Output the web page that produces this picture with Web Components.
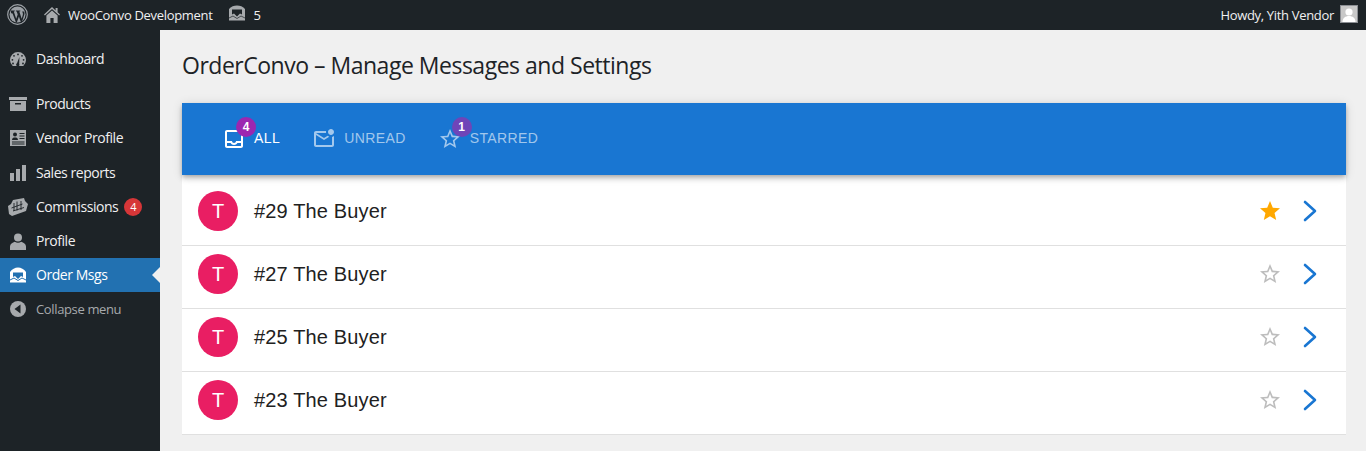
<!DOCTYPE html>
<html lang="en"><head><meta charset="utf-8"><title>OrderConvo</title>
<style>
html,body{margin:0;height:451px;overflow:hidden;background:#f0f0f0}
body{display:flex;flex-direction:column;font-family:"Open Sans","Noto Sans",sans-serif}
.shell{display:flex;flex:1;min-height:0}
</style></head><body>
<template id="t-bar"><style>
:host{display:flex;align-items:center;height:30px;background:#1d2327;color:#f0f0f1;font:13px/30px "Open Sans",sans-serif;letter-spacing:-.32px;flex:none}
.gap{flex:1}
.logo{margin-left:7px;width:21px;height:21px;margin-top:-1px}
.home{margin-left:16px;width:16px;height:16px;margin-top:0}
.site{margin-left:8px}
.msg{margin-left:16px;width:18px;height:16px;margin-top:-5px}
.n{margin-left:7px}
.how{margin-right:6px}
.av{width:18px;height:18px;margin-right:8px;margin-top:-2px;display:block}
svg{display:block;flex:none}
</style>
<svg class="logo" viewBox="0 0 21 21"><circle cx="10.5" cy="10.5" r="9.8" fill="none" stroke="#9ca1a6" stroke-width="1.2"/><circle cx="10.5" cy="10.5" r="8" fill="#9ca1a6"/><path d="M3.6 6.6h4.2v.6l-1 .2 2.4 7.4 1.5-4.4-1-3-.8-.2v-.6h4.4v.6l-1 .2 2.4 7.3 1.1-3.7c.4-1.5-.2-2.6-.7-3.5h2.2l.2 2.6-2.6 8.2-.9.3-2.1-6.1-2.1 6.1-.9-.3-3.3-8.9-1.4-.2z" fill="#1d2327"/></svg>
<svg class="home" viewBox="0 0 16 16"><path d="M8 0 0 7.4l.9 1L8 2l7.1 6.4.9-1-2.400-2.200V1h-2v2.400z" fill="#a7aaad"/><path d="M2.400 8.600 8 3.500l5.600 5.100V16H9.600v-5H6.400v5h-4z" fill="#a7aaad"/></svg>
<span class="site">WooConvo Development</span>
<svg class="msg" viewBox="0 0 18 16"><path d="M1 15.500V4C3 1.500 6 .5 9 .5S15 1.500 17 4v11.500z" fill="#a7aaad"/><path d="M4 4.500h10v5l-2-1-3 3-3-3-2 1z" fill="#1d2327"/><path d="M1 13l4-2 4 2.500 4-2.500 4 2" stroke="#1d2327" stroke-width=".7" fill="none"/></svg>
<span class="n">5</span>
<span class="gap"></span>
<span class="how">Howdy, Yith Vendor</span>
<svg class="av" viewBox="0 0 18 18"><rect width="18" height="18" fill="#c8c8c8"/><rect x=".5" y=".5" width="17" height="17" fill="none" stroke="#8c8f94"/><circle cx="9" cy="7" r="3.600" fill="#fff"/><path d="M2.500 17c0-4 3-6 6.500-6s6.500 2 6.500 6z" fill="#fff"/></svg>
</template>

<template id="t-menu"><style>
:host{display:block;width:160px;flex:none;background:#1d2327;padding-top:12px;box-sizing:border-box}
</style><slot></slot></template>

<template id="t-item"><style>
:host{display:flex;align-items:center;height:34.2px;color:#f0f0f1;font:14px/18px "Open Sans",sans-serif;letter-spacing:-.45px;position:relative}
:host([sep]){margin-bottom:11px}
:host([current]){background:#2271b1;color:#fff}
:host([muted]){color:#a7aaad;font-size:13px;letter-spacing:-.36px}
:host([current])::after{content:"";position:absolute;right:0;top:50%;margin-top:-8px;border:8px solid transparent;border-right-color:#f0f0f0;border-left-width:0}
.i{width:36px;display:flex;justify-content:center;flex:none}
.b{margin-left:6px;width:18px;height:18px;border-radius:50%;background:#d63638;color:#fff;font-size:11px;line-height:18px;text-align:center;letter-spacing:0}
.b:empty{display:none}
</style><span class="i"><slot name="icon"></slot></span><slot></slot><span class="b"></span></template>

<template id="t-main"><style>
:host{display:block;flex:1;min-width:0;padding:0 20px 0 22px}
h1{margin:0;height:73px;box-sizing:border-box;padding-top:21px;font:400 23px/29px "Open Sans",sans-serif;letter-spacing:-.49px;color:#1d2327}
</style><h1><slot name="title"></slot></h1><slot></slot></template>

<template id="t-tabs"><style>
:host{display:flex;height:72px;background:#1976d2;padding-left:40px;align-items:center;position:relative;z-index:1;box-shadow:0 2px 4px -1px rgba(0,0,0,.2),0 4px 5px 0 rgba(0,0,0,.14),0 1px 10px 0 rgba(0,0,0,.12)}
</style><slot></slot></template>

<template id="t-tab"><style>
:host{display:flex;align-items:center;position:relative;height:24px;color:rgba(255,255,255,.6);font:14px/22px "Liberation Sans",Arial,sans-serif;letter-spacing:.4px}
:host([active]){color:#fff}
.ic{width:24px;height:24px;position:relative;margin-right:8px;flex:none}
.lb{margin-bottom:2px}
::slotted(svg){display:block;width:24px;height:24px;fill:currentColor}
.bd{position:absolute;left:14px;top:-10px;width:20px;height:20px;border-radius:50%;background:var(--bd,#9c27b0);color:#fff;font:700 12px/20px "Liberation Sans",Arial,sans-serif;text-align:center;letter-spacing:0}
.bd:empty{display:none}
</style><span class="ic"><slot name="icon"></slot><span class="bd"></span></span><span class="lb"><slot></slot></span></template>

<template id="t-list"><style>
:host{display:block;background:#fff;padding-top:8px}
</style><slot></slot></template>

<template id="t-row"><style>
:host{display:block;height:62px;border-bottom:1px solid #e0e0e0;padding:0 29px 0 16px;color:#212121;font:20px/40px "Liberation Sans",Arial,sans-serif;letter-spacing:.15px}
.w{display:flex;align-items:center;height:40px;padding-top:8px}
.a{width:40px;height:40px;border-radius:50%;background:#e91e63;color:#fff;text-align:center;flex:none;margin-right:16px;letter-spacing:0}
.t{flex:1}
svg{display:block;flex:none}
.s{width:24px;height:24px;fill:#bdbdbd;margin-right:-1px}
:host([starred]) .s{fill:#ffa800}
.c{width:14px;height:22px;margin-left:22px;fill:none;stroke:#1976d2;stroke-width:2.6;stroke-linecap:round;stroke-linejoin:round}
</style><div class="w"><span class="a"></span><span class="t"><slot></slot></span>
<svg class="s" viewBox="0 0 24 24"><path class="p"/></svg>
<svg class="c" viewBox="0 0 14 22"><path d="M2 2l10 9-10 9"/></svg></div></template>

<script>
const star='M22 9.24l-7.19-.62L12 2 9.19 8.63 2 9.24l5.46 4.73L5.82 21 12 17.27 18.18 21l-1.63-7.03L22 9.24zM12 15.4l-3.76 2.27 1-4.28-3.32-2.88 4.38-.38L12 6.1l1.71 4.04 4.38.38-3.32 2.88 1 4.28L12 15.4z';
const starFill='M12 17.27 18.18 21l-1.64-7.03L22 9.24l-7.19-.61L12 2 9.19 8.63 2 9.24l5.46 4.73L5.82 21z';
function def(tag,id,init){customElements.define(tag,class extends HTMLElement{
  constructor(){super();this.attachShadow({mode:'open'}).appendChild(document.getElementById(id).content.cloneNode(true));}
  connectedCallback(){init&&init(this,this.shadowRoot);}
});}
def('wp-admin-bar','t-bar');
def('wp-side-menu','t-menu');
def('wp-menu-item','t-item',(h,s)=>{s.querySelector('.b').textContent=h.getAttribute('badge')||'';});
def('convo-main','t-main');
def('convo-tabs','t-tabs');
def('convo-tab','t-tab',(h,s)=>{s.querySelector('.bd').textContent=h.getAttribute('badge')||'';});
def('convo-list','t-list');
def('convo-row','t-row',(h,s)=>{s.querySelector('.a').textContent=h.getAttribute('letter')||'';s.querySelector('.p').setAttribute('d',h.hasAttribute('starred')?starFill:star);});
</script>

<wp-admin-bar></wp-admin-bar>
<div class="shell">
<wp-side-menu>
 <wp-menu-item sep><svg slot="icon" width="16" height="14" viewBox="0 0 16 14"><path d="M2.700 14A8 8 0 1 1 13.300 14Z" fill="#a7aaad"/><g fill="#1d2327"><circle cx="8" cy="2.400" r=".9"/><circle cx="4" cy="3.800" r=".9"/><circle cx="12" cy="3.800" r=".9"/><circle cx="2.400" cy="7.800" r=".9"/><circle cx="13.600" cy="7.800" r=".9"/><circle cx="3" cy="11.500" r=".9"/><circle cx="13" cy="11.500" r=".9"/><path d="M9.400 5 7 11.300a1.600 1.600 0 1 0 2.200.6z"/></g></svg>Dashboard</wp-menu-item>
 <wp-menu-item><svg slot="icon" width="18" height="18" viewBox="0 0 18 18" fill="#a7aaad"><path d="M0 2h18v3H0zM1 6h16v10H1z"/><path d="M6 8h6v1.500H6z" fill="#1d2327"/></svg>Products</wp-menu-item>
 <wp-menu-item><svg slot="icon" width="16" height="16" viewBox="0 0 16 16"><path d="M0 0h16v16H0z" fill="#a7aaad"/><circle cx="5" cy="4.500" r="2" fill="#1d2327"/><path d="M2 10c0-2 1.500-2.500 3-2.500S8 8 8 10zM9.500 3h5v1h-5zM9.500 5.500h5v1h-5zM9.500 8h5v1h-5zM2 11.500h12.500v1H2zM2 13.500h12.500v1H2z" fill="#1d2327"/></svg>Vendor Profile</wp-menu-item>
 <wp-menu-item><svg slot="icon" width="16" height="16" viewBox="0 0 16 16" fill="#a7aaad"><path d="M0 8h4v8H0zM6 4h4v12H6zM12 0h4v16h-4z"/></svg>Sales reports</wp-menu-item>
 <wp-menu-item badge="4"><svg slot="icon" width="20" height="18" viewBox="0 0 20 18"><path d="M0 8 3 6 5 2 16 0 17 3 20 6 18 13 4 18 1 16z" fill="#a7aaad"/><path d="M6 5v8M9 3.500v9M13 3v9M3.500 10l11-4M5 13l11-3.500" stroke="#1d2327" stroke-width=".9" fill="none"/></svg>Commissions</wp-menu-item>
 <wp-menu-item><svg slot="icon" width="16" height="17" viewBox="0 0 16 17" fill="#a7aaad"><circle cx="8" cy="4.500" r="4"/><path d="M0 17v-3.500c0-2.500 2.500-4 4.800-4.700 1.800 1.200 4.600 1.200 6.400 0 2.300.7 4.800 2.200 4.800 4.700V17z"/></svg>Profile</wp-menu-item>
 <wp-menu-item current><svg slot="icon" width="18" height="16" viewBox="0 0 18 16"><path d="M1 15.500V5C3 2 6 .5 9 .5S15 2 17 5v10.500z" fill="#fff"/><path d="M4 5.500h10v4.500l-2-1-3 3-3-3-2 1z" fill="#2271b1"/><path d="M1 13l4-2 4 2.500 4-2.500 4 2" stroke="#2271b1" fill="none"/></svg>Order Msgs</wp-menu-item>
 <wp-menu-item muted><svg slot="icon" width="16" height="16" viewBox="0 0 16 16"><circle cx="8" cy="8" r="8" fill="#a7aaad"/><path d="M10.500 3.500v9L4.500 8z" fill="#1d2327"/></svg>Collapse menu</wp-menu-item>
</wp-side-menu>
<convo-main>
 <span slot="title">OrderConvo – Manage Messages and Settings</span>
 <convo-tabs>
  <convo-tab active badge="4" style="margin-right:32px"><svg slot="icon" viewBox="0 0 24 24"><path d="M19 3H5c-1.100 0-2 .9-2 2v14c0 1.100.9 2 2 2h14c1.100 0 2-.9 2-2V5c0-1.100-.9-2-2-2zm0 16H5v-3h3.560c.69 1.190 1.970 2 3.450 2s2.750-.81 3.450-2H19v3zm0-5h-4.990c0 1.100-.9 2-2 2s-2-.9-2-2H5V5h14v9z"/></svg>ALL</convo-tab>
  <convo-tab style="margin-right:32px"><svg slot="icon" viewBox="0 0 24 24"><path d="M22 8.980V18c0 1.100-.9 2-2 2H4c-1.100 0-2-.9-2-2V6c0-1.100.9-2 2-2h10.100c-.06.32-.1.66-.1 1s.04.68.1 1H4l8 5 3.670-2.290c.47.43 1.020.76 1.630 1L12 13 4 8v10h16V9.900c.74-.15 1.420-.48 2-.92zM16 5c0 1.660 1.340 3 3 3s3-1.340 3-3-1.340-3-3-3-3 1.340-3 3z"/></svg>UNREAD</convo-tab>
  <convo-tab badge="1" style="--bd:#6f45b8"><svg slot="icon" viewBox="0 0 24 24"><path d="M22 9.240l-7.190-.62L12 2 9.190 8.630 2 9.240l5.460 4.730L5.820 21 12 17.270 18.180 21l-1.630-7.030L22 9.240zM12 15.400l-3.760 2.270 1-4.280-3.320-2.880 4.380-.38L12 6.100l1.710 4.040 4.380.38-3.320 2.880 1 4.280L12 15.400z"/></svg>STARRED</convo-tab>
 </convo-tabs>
 <convo-list>
  <convo-row letter="T" starred>#29 The Buyer</convo-row>
  <convo-row letter="T">#27 The Buyer</convo-row>
  <convo-row letter="T">#25 The Buyer</convo-row>
  <convo-row letter="T">#23 The Buyer</convo-row>
 </convo-list>
</convo-main>
</div>
</body></html>
